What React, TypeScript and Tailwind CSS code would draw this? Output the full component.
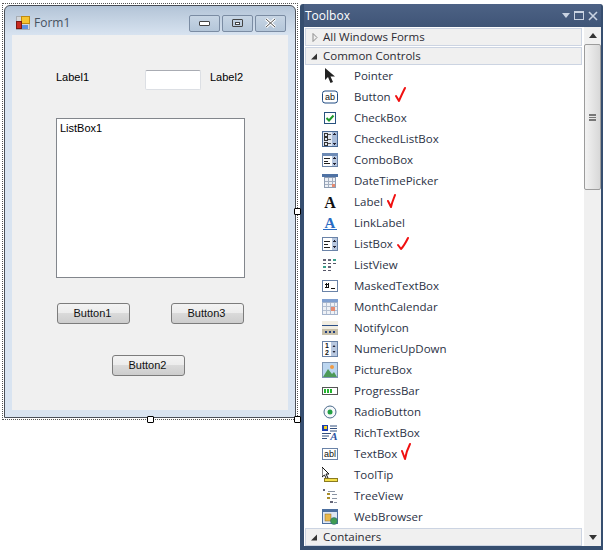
import React from 'react';

const Check = ({ d, w = 16, h = 18 }: { d: string; w?: number; h?: number }) => (
  <svg width={w} height={h} viewBox={`0 0 ${w} ${h}`} className="ml-[3px] shrink-0" fill="none">
    <path d={d} stroke="#f01010" strokeWidth="2" strokeLinecap="round" strokeLinejoin="round" />
  </svg>
);

const Ico = ({ children }: { children: React.ReactNode }) => (
  <svg width="16" height="16" viewBox="0 0 16 16" fill="none" shapeRendering="crispEdges">
    {children}
  </svg>
);

const icons: Record<string, React.ReactNode> = {
  Pointer: (
    <Ico>
      <path d="M3 0v12l3-3 2.5 6 2.5-1-2.5-5.500H13z" fill="#222" shapeRendering="auto" />
    </Ico>
  ),
  Button: (
    <svg width="16" height="16" viewBox="0 0 16 16" fill="none">
      <rect x="0.5" y="2" width="15" height="12" rx="2.500" fill="#fff" stroke="#1f4b82" />
      <text x="8" y="11" textAnchor="middle" fontSize="9" fontFamily="Liberation Sans, sans-serif" fill="#111">ab</text>
    </svg>
  ),
  CheckBox: (
    <Ico>
      <rect x="2.500" y="2.500" width="11" height="11" fill="#fff" stroke="#28527f" />
      <path d="M4.500 8l2.500 2.500L11.500 5.500" stroke="#1f9a2a" strokeWidth="2" shapeRendering="auto" />
    </Ico>
  ),
  CheckedListBox: (
    <Ico>
      <rect x="0.5" y="0.5" width="15" height="15" fill="#dfe6f2" stroke="#4a6a96" />
      <rect x="10" y="1" width="5" height="14" fill="#a9bcd9" />
      <path d="M11 4l1.500-2 1.500 2zM11 12l1.500 2 1.500-2z" fill="#223" />
      <rect x="2" y="2" width="3" height="3" stroke="#333" />
      <rect x="2" y="6.500" width="3" height="3" stroke="#333" />
      <rect x="2" y="11" width="3" height="3" stroke="#333" />
      <path d="M6 3.500h3M6 8h3M6 12.500h3" stroke="#555" />
    </Ico>
  ),
  ComboBox: (
    <Ico>
      <rect x="0.5" y="1.500" width="15" height="13" fill="#fff" stroke="#6a83a8" />
      <rect x="0" y="1" width="16" height="3" fill="#6d8ab5" />
      <rect x="10" y="4" width="5" height="10" fill="#b8c8e0" />
      <path d="M11 7l1.500-2 1.500 2zM11 11l1.500 2 1.500-2z" fill="#223" />
      <path d="M2 6.500h6M2 9h4M2 11.500h6" stroke="#222" />
    </Ico>
  ),
  DateTimePicker: (
    <Ico>
      <rect x="0" y="1" width="16" height="3" fill="#4f72a4" />
      <rect x="2.500" y="4.500" width="11" height="10" fill="#eef1f6" stroke="#8f9db3" />
      <path d="M6 5v9M10 5v9M3 8h10M3 11h10" stroke="#a4afc0" />
      <rect x="10" y="11" width="3" height="3" fill="#e58a70" />
    </Ico>
  ),
  Label: (
    <svg width="16" height="16" viewBox="0 0 16 16">
      <text x="8" y="14" textAnchor="middle" fontSize="16" fontWeight="700" fontFamily="Liberation Serif, serif" fill="#111">A</text>
    </svg>
  ),
  LinkLabel: (
    <svg width="16" height="16" viewBox="0 0 16 16">
      <text x="8" y="13" textAnchor="middle" fontSize="15" fontWeight="700" fontFamily="Liberation Serif, serif" fill="#2a6cc4">A</text>
      <rect x="1" y="14" width="14" height="1" fill="#2a6cc4" />
    </svg>
  ),
  ListBox: (
    <Ico>
      <rect x="0.5" y="1.500" width="15" height="13" fill="#fff" stroke="#6a83a8" />
      <rect x="10" y="2" width="5" height="12" fill="#b8c8e0" />
      <path d="M11 6l1.500-2 1.500 2zM11 10l1.500 2 1.500-2z" fill="#223" />
      <path d="M2 5h6M2 8h4M2 11h6" stroke="#222" />
    </Ico>
  ),
  ListView: (
    <Ico>
      <path d="M1 3h3M6 3h3M11 3h3M1 10h3M6 10h3" stroke="#667" strokeWidth="2" />
      <path d="M1 6h3M6 6h3M11 6h3M1 13h3M6 13h3" stroke="#556" />
      <rect x="11" y="2" width="3" height="2" fill="#3aa08c" />
      <rect x="1" y="9" width="3" height="2" fill="#3aa08c" />
    </Ico>
  ),
  MaskedTextBox: (
    <Ico>
      <rect x="0.5" y="2.500" width="15" height="11" fill="#fff" stroke="#6a83a8" />
      <path d="M3 6h4M3 9h4M4 5v5M6 5v5" stroke="#111" />
      <path d="M9 10h4" stroke="#111" />
    </Ico>
  ),
  MonthCalendar: (
    <Ico>
      <rect x="0" y="0" width="16" height="3" fill="#7f9fd0" />
      <rect x="0.5" y="3.500" width="15" height="12" fill="#eef1f6" stroke="#a3b3cc" />
      <path d="M4 4v11M8 4v11M12 4v11M1 7h14M1 11h14" stroke="#b4bfd0" />
      <rect x="9" y="8" width="4" height="4" fill="#e58a70" />
    </Ico>
  ),
  NotifyIcon: (
    <Ico>
      <rect x="0" y="1" width="16" height="14" fill="#f2eee2" />
      <rect x="0" y="5" width="16" height="1" fill="#2c4f86" />
      <rect x="0" y="9" width="16" height="6" fill="#c8c0a8" />
      <path d="M3 12h2M7 12h2M11 12h2" stroke="#24407a" strokeWidth="2" />
    </Ico>
  ),
  NumericUpDown: (
    <svg width="16" height="16" viewBox="0 0 16 16">
      <rect x="0.5" y="0.5" width="15" height="15" fill="#fff" stroke="#6a83a8" />
      <rect x="9" y="1" width="6" height="14" fill="#b8c8e0" />
      <text x="5" y="7" textAnchor="middle" fontSize="7" fontWeight="700" fontFamily="Liberation Sans, sans-serif" fill="#111">1</text>
      <text x="5" y="14" textAnchor="middle" fontSize="7" fontWeight="700" fontFamily="Liberation Sans, sans-serif" fill="#111">2</text>
      <path d="M10.500 6l1.500-2 1.500 2zM10.500 10l1.500 2 1.500-2z" fill="#223" />
    </svg>
  ),
  PictureBox: (
    <Ico>
      <rect x="0.5" y="0.5" width="15" height="15" fill="#bcd6f0" stroke="#7f96b4" />
      <path d="M1 15l5-8 4 5 2-2 3 5z" fill="#4d9a58" shapeRendering="auto" />
      <circle cx="10" cy="5" r="2" fill="#ef9a45" shapeRendering="auto" />
    </Ico>
  ),
  ProgressBar: (
    <Ico>
      <rect x="0.5" y="4.500" width="15" height="7" rx="1" fill="#fff" stroke="#555" />
      <path d="M3 6v4M6 6v4M9 6v4" stroke="#25b52f" strokeWidth="2" />
    </Ico>
  ),
  RadioButton: (
    <svg width="16" height="16" viewBox="0 0 16 16">
      <circle cx="8" cy="8" r="6" fill="#f6f8fb" stroke="#4a6a8a" />
      <circle cx="8" cy="8" r="2.500" fill="#23a042" />
    </svg>
  ),
  RichTextBox: (
    <svg width="16" height="16" viewBox="0 0 16 16">
      <rect x="0" y="0" width="6" height="6" fill="#1e3fb0" />
      <rect x="2" y="1" width="3" height="3" fill="#f2d020" />
      <path d="M8 1h7M8 3.500h7M8 6h7M0 8.500h9M0 11h7M0 13.500h5" stroke="#33507e" />
      <text x="12" y="15" textAnchor="middle" fontSize="11" fontStyle="italic" fontWeight="700" fontFamily="Liberation Serif, serif" fill="#2d54a0">A</text>
    </svg>
  ),
  TextBox: (
    <svg width="16" height="16" viewBox="0 0 16 16">
      <rect x="0.5" y="2.500" width="15" height="11" fill="#fff" stroke="#6a83a8" />
      <text x="8" y="11" textAnchor="middle" fontSize="9" fontFamily="Liberation Sans, sans-serif" fill="#111">abl</text>
    </svg>
  ),
  ToolTip: (
    <Ico>
      <path d="M0 0v10l2.500-2 2 4 1.500-1-2-4H7z" fill="#fff" stroke="#111" shapeRendering="auto" />
      <rect x="2.500" y="11.500" width="13" height="3" fill="#f4e04a" stroke="#8a7a20" />
    </Ico>
  ),
  TreeView: (
    <Ico>
      <rect x="1" y="1" width="2" height="2" fill="#667" />
      <rect x="5" y="5" width="3" height="2" fill="#a98d2c" />
      <rect x="5" y="9" width="3" height="2" fill="#a98d2c" />
      <rect x="8" y="13" width="3" height="2" fill="#667" />
      <path d="M6 3h7M10 6h5M10 10h5M12 14h3" stroke="#8a94a4" />
    </Ico>
  ),
  WebBrowser: (
    <svg width="16" height="16" viewBox="0 0 16 16">
      <rect x="0.5" y="0.5" width="15" height="14" fill="#dfe7f3" stroke="#4c6f9f" />
      <rect x="1" y="1" width="14" height="2" fill="#4c6f9f" />
      <rect x="3" y="5" width="6" height="7" fill="#eab84a" stroke="#8a6a20" strokeWidth="0.5" />
      <circle cx="12" cy="12" r="3.500" fill="#3f9c52" stroke="#2a5f88" strokeWidth="0.5" />
    </svg>
  ),
};

const checks: Record<string, { d: string; w: number; h: number; cls: string }> = {
  Button: { d: 'M2 10l3 5c2-5 4-9 6-13', w: 13, h: 18, cls: '-mt-[3px]' },
  Label: { d: 'M2 9l3 6c1-5 3-9 4-12', w: 12, h: 18, cls: '-mt-[2px]' },
  ListBox: { d: 'M2 11l3 4c3-3 5-7 7-11', w: 14, h: 18, cls: '-mt-[1px]' },
  TextBox: { d: 'M2 9l3 8c1-6 3-11 5-15', w: 13, h: 20, cls: '-mt-[3px]' },
};

const tools = [
  'Pointer', 'Button', 'CheckBox', 'CheckedListBox', 'ComboBox', 'DateTimePicker', 'Label', 'LinkLabel',
  'ListBox', 'ListView', 'MaskedTextBox', 'MonthCalendar', 'NotifyIcon', 'NumericUpDown', 'PictureBox',
  'ProgressBar', 'RadioButton', 'RichTextBox', 'TextBox', 'ToolTip', 'TreeView', 'WebBrowser',
];

const CategoryHeader = ({ label, open }: { label: string; open?: boolean }) => (
  <div className="flex h-[18px] items-center border border-[#ccd4e2] bg-[#f0f0f0] text-[#2b2b33]">
    <span className="flex w-[17px] shrink-0 justify-center">
      {open ? (
        <svg width="7" height="7" viewBox="0 0 7 7"><path d="M0 6.500L6 6.500 6 0.5z" fill="#333" /></svg>
      ) : (
        <svg width="6" height="9" viewBox="0 0 6 9" fill="none"><path d="M1 .5l4 4-4 4z" stroke="#8a8a8a" /></svg>
      )}
    </span>
    {label}
  </div>
);

const FormButton = ({ label, className }: { label: string; className: string }) => (
  <button className={`absolute flex h-[21px] w-[73px] items-center justify-center rounded-[3px] border border-[#7c7c7c] bg-[linear-gradient(#f3f3f3_0%,#ececec_48%,#dadada_50%,#cdcdcd_100%)] pr-[2px] text-[11px] text-[#111] ${className}`}>
    {label}
  </button>
);

const Handle = ({ className }: { className: string }) => (
  <span className={`absolute h-[7px] w-[7px] rounded-[1px] border border-black bg-white ${className}`} />
);

const CaptionButton = ({ children }: { children: React.ReactNode }) => (
  <span className="flex h-[17px] w-[31px] items-center justify-center rounded-[2px] border border-[#7b8ca3] bg-[linear-gradient(#c7d5e4,#b4c6d9)]">
    {children}
  </span>
);

export default function App() {
  return (
    <div className="flex h-[553px] w-[609px] items-start overflow-hidden bg-white font-['Liberation_Sans',sans-serif]">
      {/* designer surface */}
      <div className="ml-[2px] mt-[3px] w-[296px] shrink-0">
        <div className="relative h-[417px] border border-dotted border-[#555] p-px">
          <div className="flex h-full flex-col rounded-t-[6px] border border-[#4a4f57] bg-[linear-gradient(#b3c4d7,#d9e4f1_30px)] px-[7px] pb-[7px]">
            <div className="flex h-[29px] shrink-0 items-center pt-[5px]">
              <svg width="16" height="16" viewBox="0 0 16 16" className="ml-[3px] shrink-0" shapeRendering="crispEdges">
                <rect x="1" y="1" width="13" height="13" fill="#d5d8dc" stroke="#a8adb3" />
                <rect x="6" y="1" width="8" height="7" fill="#f6c530" stroke="#c08a10" />
                <rect x="1" y="6" width="5" height="7" fill="#c92a20" stroke="#7c1a10" />
                <rect x="7" y="10" width="6" height="4" fill="#5f92e0" />
              </svg>
              <span className="ml-[3px] font-['Open_Sans',sans-serif] text-[12px] text-[#47525f]">Form1</span>
              <div className="ml-auto mr-[2px] flex gap-[2px]">
                <CaptionButton><span className="h-[5px] w-[11px] rounded-[1px] border border-[#444] bg-white" /></CaptionButton>
                <CaptionButton><span className="flex h-[8px] w-[11px] items-center justify-center rounded-[1px] border border-[#444]"><span className="h-[3px] w-[5px] border border-[#444] bg-white" /></span></CaptionButton>
                <CaptionButton>
                  <svg width="13" height="10" viewBox="0 0 13 10"><path d="M2 1l9 8M11 1l-9 8" stroke="#fff" strokeWidth="3" /><path d="M2 1l9 8M11 1l-9 8" stroke="#555" strokeWidth="1" /></svg>
                </CaptionButton>
              </div>
            </div>
            {/* client area, controls sit where they were dropped */}
            <div className="relative flex-1 bg-[#f0f0f0] text-[11px] text-black">
              <span className="absolute left-[44px] top-[34px]">Label1</span>
              <div className="absolute left-[133px] top-[35px] h-[20px] w-[56px] rounded-[2px] border border-[#dcdfe4] border-t-[#a9acb3] bg-white" />
              <span className="absolute left-[198px] top-[34px]">Label2</span>
              <div className="absolute left-[44px] top-[83px] h-[160px] w-[189px] border border-[#82868c] bg-white px-[3px] pt-px">ListBox1</div>
              <FormButton label="Button1" className="left-[45px] top-[268px]" />
              <FormButton label="Button3" className="left-[159px] top-[268px]" />
              <FormButton label="Button2" className="left-[100px] top-[320px]" />
            </div>
          </div>
          <Handle className="-bottom-[4px] left-[144px]" />
          <Handle className="-bottom-[4px] -right-[4px]" />
          <Handle className="-right-[4px] top-[204px]" />
        </div>
      </div>

      {/* toolbox */}
      <div className="ml-[2px] mt-[4px] flex h-[546px] w-[303px] shrink-0 flex-col rounded-t-[3px] bg-[#364e6f] pb-[4px] pl-[4px] pr-[2px] font-['Open_Sans',sans-serif] text-[11.5px]">
        <div className="flex h-[23px] shrink-0 items-center justify-between bg-[linear-gradient(#4d6285,#3f5577)] pl-px pr-[3px] text-[12px] text-white">
          <span>Toolbox</span>
          <span className="flex items-center gap-[4px]">
            <svg width="8" height="5" viewBox="0 0 8 5"><path d="M0 0h8L4 5z" fill="#c9d3e2" /></svg>
            <span className="h-[9px] w-[10px] border border-t-2 border-[#c9d3e2]" />
            <svg width="10" height="10" viewBox="0 0 10 10"><path d="M1 1l8 8M9 1l-8 8" stroke="#c9d3e2" strokeWidth="1.6" /></svg>
          </span>
        </div>
        <div className="flex min-h-0 flex-1 bg-white">
          <div className="flex min-w-0 flex-1 flex-col pl-px pr-[2px] pt-px">
            <CategoryHeader label="All Windows Forms" />
            <div className="mt-px">
              <CategoryHeader label="Common Controls" open />
            </div>
            <div className="pb-px">
              {tools.map((t) => (
                <div key={t} className="flex h-[21px] items-center text-[#2b3245]">
                  <span className="ml-[17px] flex w-[16px] shrink-0 justify-center">{icons[t]}</span>
                  <span className="ml-[16px]">{t}</span>
                  {checks[t] && (
                    <span className={checks[t].cls}>
                      <Check d={checks[t].d} w={checks[t].w} h={checks[t].h} />
                    </span>
                  )}
                </div>
              ))}
            </div>
            <CategoryHeader label="Containers" open />
          </div>
          {/* scrollbar */}
          <div className="flex w-[17px] shrink-0 flex-col bg-[#f0f0f0]">
            <div className="flex h-[17px] shrink-0 items-center justify-center">
              <svg width="8" height="5" viewBox="0 0 8 5"><path d="M4 0l4 5H0z" fill="#333" /></svg>
            </div>
            <div className="flex h-[146px] items-center justify-center rounded-[2px] border border-[#9c9c9c] bg-[linear-gradient(90deg,#f2f2f2,#d8d8d8)]">
              <span className="h-[7px] w-[7px] border-y border-[#777] bg-[linear-gradient(#777_1px,transparent_1px)] bg-[length:100%_2px]" />
            </div>
            <div className="mt-auto flex h-[17px] shrink-0 items-center justify-center">
              <svg width="8" height="5" viewBox="0 0 8 5"><path d="M0 0h8L4 5z" fill="#333" /></svg>
            </div>
          </div>
        </div>
      </div>
    </div>
  );
}
